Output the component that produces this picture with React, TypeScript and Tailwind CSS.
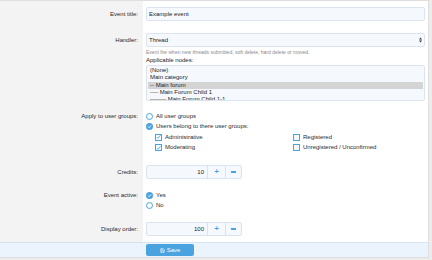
import { Save } from "lucide-react";

function Radio({ checked }: { checked?: boolean }) {
  return checked ? (
    <span className="w-[7px] h-[7px] rounded-full bg-[#4aa3df] flex items-center justify-center shrink-0">
      <svg width="5" height="5" viewBox="0 0 10 10">
        <path d="M2 5.2 L4.2 7.4 L8 3" stroke="#fff" strokeWidth="1.8" fill="none" />
      </svg>
    </span>
  ) : (
    <span className="w-[7px] h-[7px] rounded-full border border-[#4aa3df] bg-white shrink-0" />
  );
}

function Check({ checked }: { checked?: boolean }) {
  return (
    <span className="w-[7px] h-[7px] border border-[#4aa3df] bg-[#f5f9fd] flex items-center justify-center shrink-0">
      {checked && (
        <svg width="6" height="6" viewBox="0 0 10 10">
          <path d="M1.5 5 L4 7.5 L9 1.5" stroke="#4aa3df" strokeWidth="1.6" fill="none" />
        </svg>
      )}
    </span>
  );
}

function Spinner({ value }: { value: string }) {
  return (
    <div className="flex w-[96px] h-[14px] border border-[#dbe4ee] rounded-[2px] bg-[#f5f9fd]">
      <div className="w-[60px] text-right pr-[3px] leading-[12px] text-[#222]">{value}</div>
      <div className="w-[18px] border-l border-[#dbe4ee] flex items-center justify-center text-[#4aa3df] font-bold text-[8px] leading-none">
        +
      </div>
      <div className="flex-1 border-l border-[#dbe4ee] flex items-center justify-center">
        <span className="w-[5px] h-[1.5px] bg-[#4aa3df]" />
      </div>
    </div>
  );
}

const label = "w-[143px] shrink-0 bg-[#f3f3f3] text-right pr-[5px] text-[#2a2a2a]";
const field = "flex-1 pl-[3px] pr-[3px] bg-white";

export default function App() {
  const nodes = ["(None)", "Main category", "-- Main forum", "---- Main Forum Child 1", "-------- Main Forum Child 1-1"];
  return (
    <div className="w-[432px] h-[260px] bg-[#ececec] overflow-hidden" style={{ fontFamily: '"Liberation Sans", Arial, sans-serif' }}>
      <div className="w-[429px] h-[258px] bg-white border-t border-r border-b border-[#dedede] text-[6px] flex flex-col">
        {/* Event title */}
        <div className="flex">
          <div className={`${label} pt-[6px] pb-[12px] leading-[14px]`}>Event title:</div>
          <div className={`${field} pt-[6px] pb-[12px]`}>
            <div className="h-[14px] border border-[#dbe4ee] rounded-[2px] bg-[#f5f9fd] pl-[2px] leading-[12px] text-[#222]">
              Example event
            </div>
          </div>
        </div>

        {/* Handler */}
        <div className="flex">
          <div className={`${label} leading-[14px]`}>Handler:</div>
          <div className={field}>
            <div className="h-[14px] border border-[#dbe4ee] rounded-[2px] bg-[#f5f9fd] pl-[2px] pr-[2px] flex items-center justify-between text-[#222]">
              <span>Thread</span>
              <svg width="3" height="6" viewBox="0 0 6 12">
                <path d="M0 5 L3 1 L6 5 Z M0 7 L3 11 L6 7 Z" fill="#333" />
              </svg>
            </div>
            <div className="mt-[2px] h-[7px] leading-[7px] text-[5px] text-[#8a8a8a]">
              Event fire when new threads submitted, soft delete, hard delete or moved.
            </div>
            <div className="mt-[1px] h-[7px] leading-[7px] text-[#222]">Applicable nodes:</div>
            <div className="mt-[1px] h-[36px] border border-[#dbe4ee] rounded-[2px] bg-[#f5f9fd] overflow-hidden pt-[1px] px-[1px]">
              {nodes.map((n) => (
                <div
                  key={n}
                  className={`h-[7.3px] leading-[7.3px] pl-[2px] text-[#222] ${n === "-- Main forum" ? "bg-[#d4d4d4]" : ""}`}
                >
                  {n}
                </div>
              ))}
            </div>
          </div>
        </div>

        {/* Apply to user groups */}
        <div className="flex">
          <div className={`${label} pt-[9.75px] leading-[10.5px]`}>Apply to user groups:</div>
          <div className={`${field} pt-[9.75px] text-[#2a2a2a]`}>
            <div className="h-[10.5px] flex items-center gap-[3px]">
              <Radio />
              <span>All user groups</span>
            </div>
            <div className="h-[10.5px] flex items-center gap-[3px]">
              <Radio checked />
              <span>Users belong to there user groups:</span>
            </div>
            <div className="grid grid-cols-[138px_1fr] pl-[9px]">
              <div className="h-[10.5px] flex items-center gap-[3px]">
                <Check checked />
                <span>Administrative</span>
              </div>
              <div className="h-[10.5px] flex items-center gap-[3px]">
                <Check />
                <span>Registered</span>
              </div>
              <div className="h-[10.5px] flex items-center gap-[3px]">
                <Check checked />
                <span>Moderating</span>
              </div>
              <div className="h-[10.5px] flex items-center gap-[3px]">
                <Check />
                <span>Unregistered / Unconfirmed</span>
              </div>
            </div>
          </div>
        </div>

        {/* Credits */}
        <div className="flex">
          <div className={`${label} pt-[12.25px] leading-[14px]`}>Credits:</div>
          <div className={`${field} pt-[12.25px]`}>
            <Spinner value="10" />
          </div>
        </div>

        {/* Event active */}
        <div className="flex">
          <div className={`${label} pt-[10.75px] leading-[10.5px]`}>Event active:</div>
          <div className={`${field} pt-[10.75px] text-[#2a2a2a]`}>
            <div className="h-[10.5px] flex items-center gap-[3px]">
              <Radio checked />
              <span>Yes</span>
            </div>
            <div className="h-[10.5px] flex items-center gap-[3px]">
              <Radio />
              <span>No</span>
            </div>
          </div>
        </div>

        {/* Display order */}
        <div className="flex flex-1">
          <div className={`${label} pt-[11.25px] leading-[14px]`}>Display order:</div>
          <div className={`${field} pt-[11.25px]`}>
            <Spinner value="100" />
          </div>
        </div>

        {/* Save bar */}
        <div className="h-[15px] bg-[#ebf3fc] border-t border-[#d6e3f1] pl-[146px] pt-[1px]">
          <button className="w-[48px] h-[12px] bg-[#4aa3df] rounded-[2px] text-white text-[6px] flex items-center justify-center gap-[2px]">
            <Save size={5} strokeWidth={2.5} />
            Save
          </button>
        </div>
      </div>
    </div>
  );
}
